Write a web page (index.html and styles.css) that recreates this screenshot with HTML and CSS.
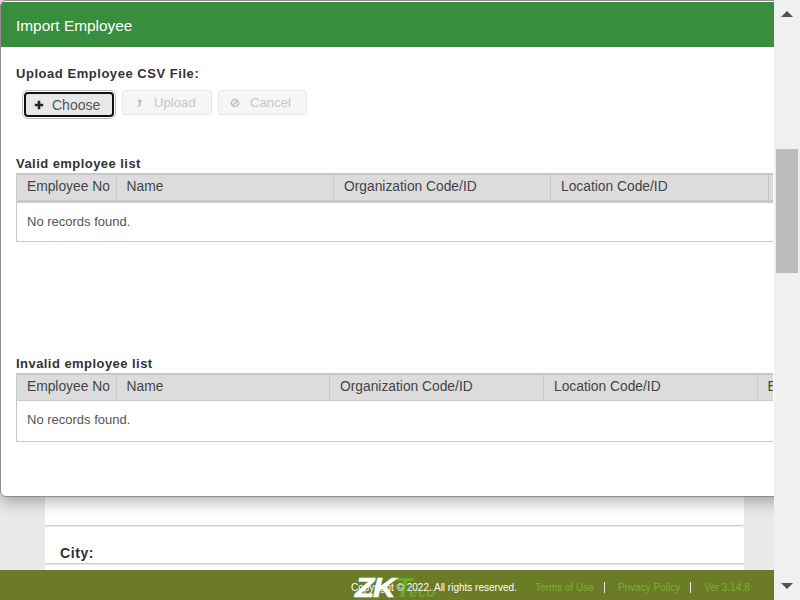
FILE: index.html
```html
<!DOCTYPE html>
<html lang="en">
<head>
  <meta charset="UTF-8" />
  <title>Import Employee</title>
  <link rel="stylesheet" href="styles.css">
</head>
<body>
  <div class="viewport">
    <div class="form-bg">
      <div class="card card-end"></div>
      <div class="card card-city"><label>City:</label></div>
      <div class="card card-input"></div>
    </div>

    <div class="modal">
      <div class="modal-head">Import Employee</div>
      <div class="modal-body">
        <div class="upload-label">Upload Employee CSV File:</div>
        <div class="upload-bar">
          <button class="btn btn-choose">
            <svg class="ico ico-dark" viewBox="0 0 10 10"><path d="M3.7.8h2.6v2.9h2.9v2.6H6.3v2.9H3.7V6.3H.8V3.7h2.9z"/></svg>
            Choose
          </button>
          <button class="btn btn-off btn-upload">
            <svg class="ico" viewBox="0 0 10 10"><path d="M5.6 1 8.6 4H6.8V6.2C6.8 8 5.5 9 3.6 9H2.2C3.8 8.6 5 7.8 5 6.2V4H3.1z"/></svg>
            Upload
          </button>
          <button class="btn btn-off btn-cancel">
            <svg class="ico ico-ban" viewBox="0 0 10 10"><circle cx="5" cy="5" r="3.6"/><path d="M2.6 7.4 7.4 2.6"/></svg>
            Cancel
          </button>
        </div>

        <h3 class="list-title title-valid">Valid employee list</h3>
        <div class="table-wrap">
          <table class="list list-valid">
            <thead>
              <tr>
                <th class="col-no">Employee No</th>
                <th class="col-name">Name</th>
                <th class="col-org">Organization Code/ID</th>
                <th class="col-loc">Location Code/ID</th>
                <th class="col-rest"></th>
              </tr>
            </thead>
            <tbody>
              <tr><td colspan="5">No records found.</td></tr>
            </tbody>
          </table>
        </div>

        <h3 class="list-title title-invalid">Invalid employee list</h3>
        <div class="table-wrap">
          <table class="list list-invalid">
            <thead>
              <tr>
                <th class="col-no">Employee No</th>
                <th class="col-name">Name</th>
                <th class="col-org">Organization Code/ID</th>
                <th class="col-loc">Location Code/ID</th>
                <th class="col-rest">Email</th>
              </tr>
            </thead>
            <tbody>
              <tr><td colspan="5">No records found.</td></tr>
            </tbody>
          </table>
        </div>
      </div>
    </div>

    <div class="footer">
      <div class="logo"><span class="logo-zk">ZK</span><span class="logo-t">T</span><span class="logo-eco">eco</span></div>
      <span class="copy">Copyright © 2022. All rights reserved.</span>
      <a class="foot-link">Terms of Use</a>
      <a class="foot-link foot-sep">Privacy Policy</a>
      <a class="foot-link foot-sep">Ver 3.14.8</a>
    </div>
  </div>

  <div class="scrollbar">
    <div class="arrow arrow-up"></div>
    <div class="track"><div class="thumb"></div></div>
    <div class="arrow arrow-down"></div>
  </div>
</body>
</html>
```

FILE: styles.css
```css
html, body {
  margin: 0;
  height: 100%;
}
body {
  display: flex;
  height: 600px;
  overflow: hidden;
  font-family: "Liberation Sans", Arial, sans-serif;
  font-size: 14px;
  color: #333;
  background: #e9e9e9;
}

.viewport {
  position: relative;
  width: 774px;
  height: 600px;
  overflow: hidden;
}

/* page behind the dialog */
.form-bg {
  width: 699px;
  margin-left: 45px;
  padding-top: 497px;
}
.card {
  background: #fff;
  border-radius: 0 0 3px 3px;
  box-sizing: border-box;
}
.card-end {
  height: 29px;
  border-bottom: 1px solid #ccc;
}
.card-city {
  height: 37px;
  margin-top: 1px;
  padding: 18px 15px 0;
  border-bottom: 1px solid #ccc;
  border-radius: 3px 3px 0 0;
}
.card-city label {
  font-size: 14px;
  font-weight: bold;
  letter-spacing: 0.6px;
  color: #2b2f3a;
}
.card-input {
  height: 40px;
  margin-top: 1px;
}

/* dialog */
.modal {
  position: absolute;
  top: 0;
  left: 0;
  width: 800px;
  height: 497px;
  box-sizing: border-box;
  background: #fff;
  border: 1px solid #8f8f8f;
  border-radius: 6px;
  box-shadow: 0 5px 15px rgba(0, 0, 0, 0.3);
  overflow: hidden;
}
.modal-head {
  height: 45px;
  margin-top: 1px;
  padding-left: 15px;
  line-height: 47px;
  font-size: 15.4px;
  color: #fff;
  background: #388e3c;
}
.modal-body {
  padding: 19px 15px 0;
}
.upload-label {
  font-weight: bold;
  font-size: 13px;
  letter-spacing: 0.54px;
  line-height: 16px;
}
.upload-bar {
  display: flex;
  gap: 6px;
  align-items: flex-start;
  margin: 8px 0 0 8px;
}

.btn {
  display: flex;
  align-items: center;
  height: 25px;
  padding: 0 11px;
  font-family: inherit;
  font-size: 14px;
  color: #555;
  background: #e8e8e8;
  border: 1px solid #d5d5d5;
  border-radius: 3px;
}
.btn-choose {
  width: 90px;
  margin-top: 2px;
  margin-right: 2px;
  padding-left: 8px;
  border: 2px solid #111;
  border-radius: 4px;
  outline: 1px solid #bbb;
  outline-offset: 1px;
}
.btn-choose .ico { margin-right: 8px; }
.btn-off {
  font-size: 13.2px;
  color: #c6c6c6;
  background: #f6f6f6;
  border-color: #e6e6e6;
}
.btn-upload { width: 90px; }
.btn-cancel { width: 89px; }
.ico {
  flex: none;
  width: 10px;
  height: 10px;
  margin-right: 10px;
  fill: #bdbdbd;
}
.ico-dark { fill: #222; }
.ico-ban {
  fill: none;
  stroke: #bdbdbd;
  stroke-width: 1.5;
}

.list-title {
  margin: 0 0 2px;
  font-size: 13px;
  font-weight: bold;
  line-height: 15px;
  letter-spacing: 0.45px;
  color: #333;
}
.title-valid { margin-top: 39px; }
.title-invalid { margin-top: 114px; }

.table-wrap {
  width: 757px;
  overflow: hidden;
  box-sizing: border-box;
  border: 1px solid #c8c8c8;
  border-right: 0;
  border-top: 0;
}
.list {
  width: 770px;
  table-layout: fixed;
  border-collapse: collapse;
}
.list th {
  padding: 0 10px;
  box-sizing: border-box;
  text-align: left;
  font-weight: normal;
  font-size: 13.8px;
  white-space: nowrap;
  color: #444;
  background: #dcdcdc;
  border-top: 2px solid #c8c8c8;
  border-right: 1px solid #c8c8c8;
}
.list td {
  padding: 0 10px 1px;
  font-size: 13px;
  color: #555;
}
.list-valid th { height: 27px; padding-bottom: 2px; border-bottom: 3px solid #c8c8c8; }
.list-valid td { height: 37px; }
.list-invalid th { height: 27px; padding-bottom: 2px; border-bottom: 1px solid #c8c8c8; }
.list-invalid td { height: 37px; padding-bottom: 3px; }
.list th.col-org, .list th.col-loc { padding-left: 10.5px; }
.col-no { width: 99px; }
.list-valid .col-name { width: 217px; }
.list-valid .col-org { width: 217px; }
.list-valid .col-loc { width: 218px; }
.list-valid .col-rest { width: 19px; }
.list-invalid .col-name { width: 213px; }
.list-invalid .col-org { width: 214px; }
.list-invalid .col-loc { width: 214px; }
.list-invalid .col-rest { width: 30px; }

/* footer */
.footer {
  position: absolute;
  left: 0;
  right: 0;
  bottom: 0;
  height: 30px;
  display: flex;
  align-items: center;
  padding-left: 351px;
  padding-top: 4px;
  box-sizing: border-box;
  font-size: 10px;
  color: #fff;
  background: #6b7b26;
}
.logo {
  position: absolute;
  left: 355px;
  top: 5px;
  display: flex;
  align-items: baseline;
  line-height: 26px;
  font-weight: bold;
  font-style: italic;
}
.logo-zk {
  width: 40px;
  font-size: 28px;
  letter-spacing: -1px;
  color: #fff;
  -webkit-text-stroke: 0.6px #fff;
  transform: scaleX(1.12);
  transform-origin: left;
}
.logo-t { font-size: 28px; color: #6aaa2c; }
.logo-eco { margin-left: -3px; font-size: 15px; letter-spacing: 0.2px; color: #76a02c; }
.copy {
  position: relative;
  width: 184px;
}
.foot-link {
  position: relative;
  color: #7bb030;
}
.foot-sep {
  margin-left: 10px;
  padding-left: 13px;
  border-left: 1px solid #e8e8d8;
}

/* fake scrollbar */
.scrollbar {
  display: flex;
  flex-direction: column;
  align-items: center;
  width: 26px;
  height: 600px;
  background: #f0f0f0;
}
.track {
  flex: 1;
  width: 22px;
  padding-top: 124px;
}
.thumb {
  width: 22px;
  height: 124px;
  background: #bdbdbd;
}
.arrow {
  width: 0;
  height: 0;
  border-left: 6px solid transparent;
  border-right: 6px solid transparent;
}
.arrow-up {
  margin-top: 11px;
  margin-bottom: 8px;
  border-bottom: 6px solid #505050;
}
.arrow-down {
  margin-top: 8px;
  margin-bottom: 11px;
  border-top: 6px solid #505050;
}
```
